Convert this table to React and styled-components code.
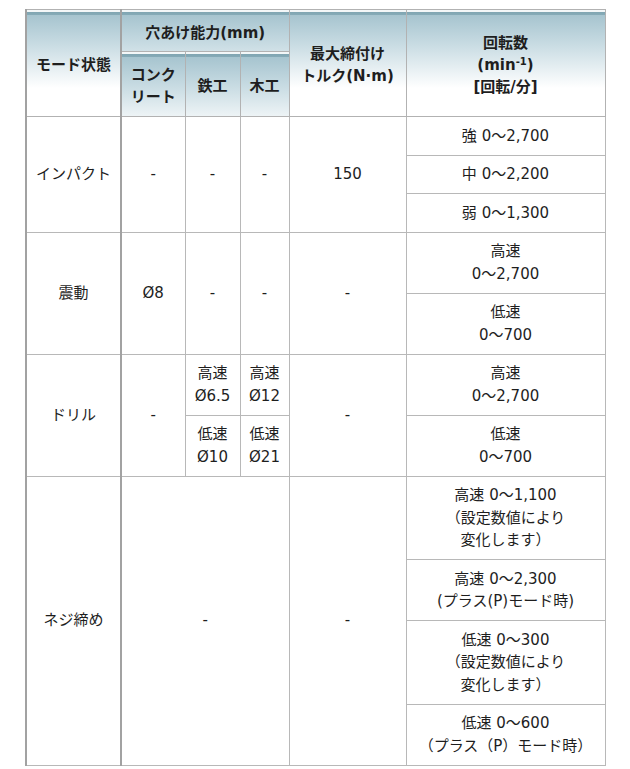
import React from 'react';
import styled, { createGlobalStyle } from 'styled-components';

const GlobalStyle = createGlobalStyle`
  html, body {
    margin: 0;
    padding: 0;
    background: #fff;
  }
  body {
    font-family: "DejaVu Sans", "Noto Sans CJK JP", sans-serif;
    color: #222;
  }
`;

const Page = styled.div`
  padding: 9px 0 0 25px;
`;

const Table = styled.table`
  border-collapse: collapse;
  table-layout: fixed;
  width: 579px;
  border-left: 2px solid #a2a2a2;
  border-top: 1px solid #a8a8a8;
  font-size: 15px;
`;

const HeadRow = styled.tr`
  height: ${p => p.$h}px;
`;

const Th = styled.th`
  border: 1px solid #b2b2b2;
  padding: 4px 2px 0;
  font-weight: bold;
  line-height: 22px;
  text-align: center;
  vertical-align: middle;
  color: #1e1e1e;
  background: linear-gradient(
    to bottom,
    #f3f7f8 0,
    #f3f7f8 2px,
    #7fa5b2 2px,
    #86abb7 5px,
    #a6c4cf 5px,
    #c9dce3 35px,
    #ffffff 78px
  );
  background-repeat: no-repeat;
  background-color: #fff;
  ${p => p.$lead && 'border-right: 2px solid #a2a2a2;'}
`;

const Tr = styled.tr`
  ${p => p.$group && `
    & > td { border-top: 1px solid #9c9c9c; }
  `}
`;

const Td = styled.td`
  border: 1px solid #b8b8b8;
  padding: 7.5px 2px;
  line-height: 22.5px;
  text-align: center;
  vertical-align: middle;
  color: #1e1e1e;
  white-space: nowrap;
  ${p => p.$lead && 'border-right: 2px solid #a2a2a2;'}
`;

const Sup = styled.span`
  font-size: 10px;
  vertical-align: 5px;
  line-height: 0;
`;

export default function App() {
  return (
    <Page>
      <GlobalStyle />
      <Table>
        <colgroup>
          <col style={{ width: 95 }} />
          <col style={{ width: 64 }} />
          <col style={{ width: 55 }} />
          <col style={{ width: 49 }} />
          <col style={{ width: 117 }} />
          <col style={{ width: 199 }} />
        </colgroup>
        <thead>
          <HeadRow $h={42}>
            <Th rowSpan={2} $lead>モード状態</Th>
            <Th colSpan={3}>穴あけ能力(mm)</Th>
            <Th rowSpan={2}>最大締付け<br />トルク(N·m)</Th>
            <Th rowSpan={2}>回転数<br />(min<Sup>-1</Sup>)<br />[回転/分]</Th>
          </HeadRow>
          <HeadRow $h={65}>
            <Th>コンク<br />リート</Th>
            <Th>鉄工</Th>
            <Th>木工</Th>
          </HeadRow>
        </thead>
        <tbody>
          <Tr $group>
            <Td rowSpan={3} $lead>インパクト</Td>
            <Td rowSpan={3}>-</Td>
            <Td rowSpan={3}>-</Td>
            <Td rowSpan={3}>-</Td>
            <Td rowSpan={3}>150</Td>
            <Td>強 0～2,700</Td>
          </Tr>
          <Tr><Td>中 0～2,200</Td></Tr>
          <Tr><Td>弱 0～1,300</Td></Tr>

          <Tr $group>
            <Td rowSpan={2} $lead>震動</Td>
            <Td rowSpan={2}>Ø8</Td>
            <Td rowSpan={2}>-</Td>
            <Td rowSpan={2}>-</Td>
            <Td rowSpan={2}>-</Td>
            <Td>高速<br />0～2,700</Td>
          </Tr>
          <Tr><Td>低速<br />0～700</Td></Tr>

          <Tr $group>
            <Td rowSpan={2} $lead>ドリル</Td>
            <Td rowSpan={2}>-</Td>
            <Td>高速<br />Ø6.5</Td>
            <Td>高速<br />Ø12</Td>
            <Td rowSpan={2}>-</Td>
            <Td>高速<br />0～2,700</Td>
          </Tr>
          <Tr>
            <Td>低速<br />Ø10</Td>
            <Td>低速<br />Ø21</Td>
            <Td>低速<br />0～700</Td>
          </Tr>

          <Tr $group>
            <Td rowSpan={4} $lead>ネジ締め</Td>
            <Td rowSpan={4} colSpan={3}>-</Td>
            <Td rowSpan={4}>-</Td>
            <Td>高速 0～1,100<br />（設定数値により<br />変化します）</Td>
          </Tr>
          <Tr><Td>高速 0～2,300<br />(プラス(P)モード時)</Td></Tr>
          <Tr><Td>低速 0～300<br />（設定数値により<br />変化します）</Td></Tr>
          <Tr><Td>低速 0～600<br />（プラス（P）モード時）</Td></Tr>
        </tbody>
      </Table>
    </Page>
  );
}
